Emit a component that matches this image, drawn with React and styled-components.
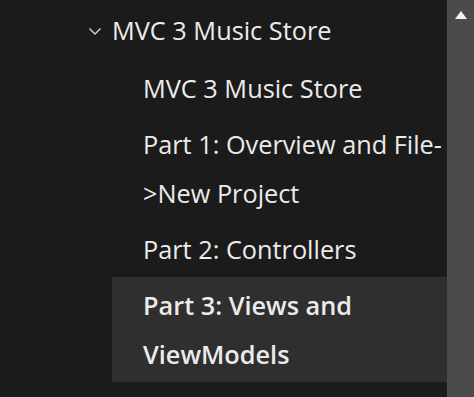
import React from "react";
import styled, { createGlobalStyle } from "styled-components";

const Global = createGlobalStyle`
  html, body { margin: 0; padding: 0; background: #1b1b1b; }
  body { font-family: "Open Sans", "Noto Sans", sans-serif; }
`;

const Frame = styled.div`
  width: 474px;
  height: 397px;
  display: flex;
  overflow: hidden;
  background: #1b1b1b;
`;

const Tree = styled.div`
  flex: 1;
  display: flex;
  flex-direction: column;
  padding-top: 4px;
`;

const ParentRow = styled.div`
  display: flex;
  align-items: center;
  padding: 2px 0 5px 88px;
  color: #ebebeb;
  font-size: 25.3px;
  line-height: 49px;
`;

const Chevron = styled.svg`
  width: 14px;
  height: 10px;
  margin-right: 10px;
  flex: none;
`;

const Item = styled.div`
  margin-left: 112px;
  padding: 4px 0 3px 31px;
  color: #ebebeb;
  font-size: 25.3px;
  line-height: 49px;
  font-weight: ${(p) => (p.$selected ? 600 : 400)};
  background: ${(p) => (p.$selected ? "#2f2f2f" : "transparent")};
`;

const Scrollbar = styled.div`
  width: 27px;
  flex: none;
  background: #4b4b4b;
  display: flex;
  justify-content: center;
  padding-top: 11px;
  box-sizing: border-box;
`;

const Arrow = styled.div`
  width: 0;
  height: 0;
  border-left: 6px solid transparent;
  border-right: 6px solid transparent;
  border-bottom: 8px solid #f2f2f2;
`;

const items = [
  { t: "MVC 3 Music Store" },
  { t: "Part 1: Overview and File->New Project" },
  { t: "Part 2: Controllers" },
  { t: "Part 3: Views and ViewModels", sel: true },
];

export default function App() {
  return (
    <Frame>
      <Global />
      <Tree>
        <ParentRow>
          <Chevron viewBox="0 0 14 10">
            <path d="M1.5 2.5 L7 8 L12.5 2.5" fill="none" stroke="#d8d8d8" strokeWidth="1.4" />
          </Chevron>
          MVC 3 Music Store
        </ParentRow>
        {items.map((it) => (
          <Item key={it.t} $selected={it.sel}>
            {it.t}
          </Item>
        ))}
      </Tree>
      <Scrollbar>
        <Arrow />
      </Scrollbar>
    </Frame>
  );
}
